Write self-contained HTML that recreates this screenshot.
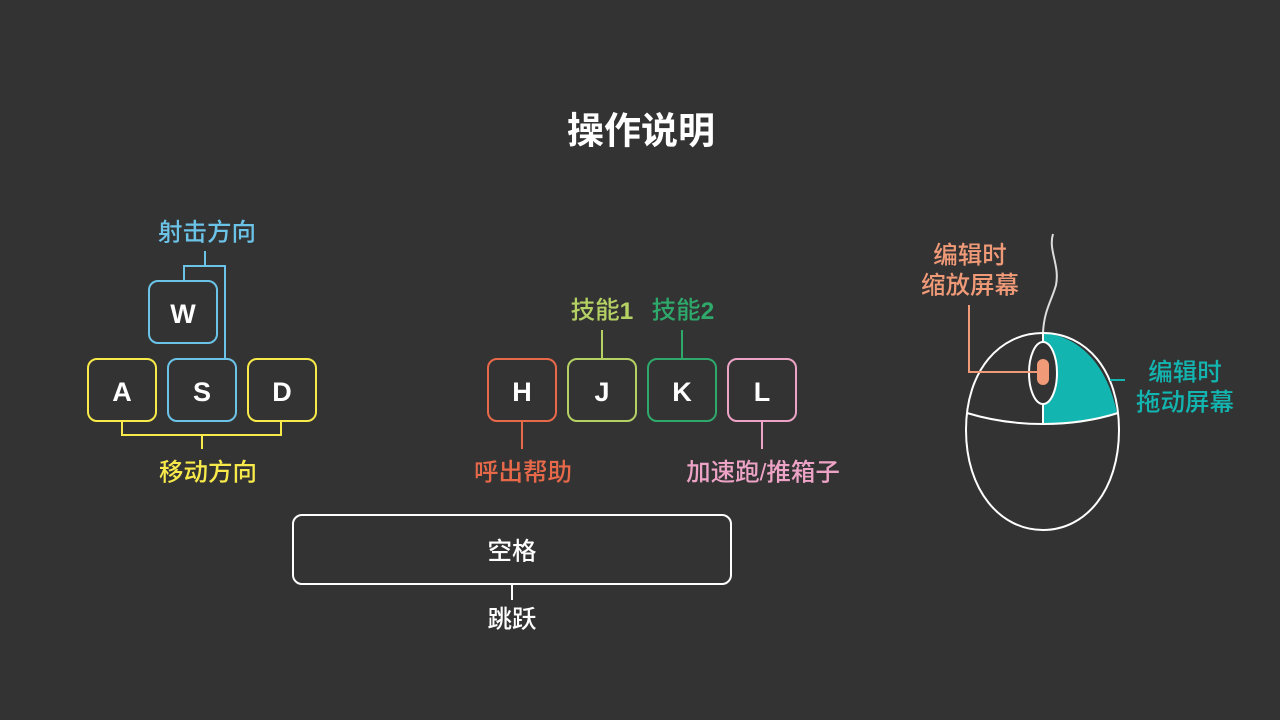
<!DOCTYPE html>
<html><head><meta charset="utf-8"><style>
html,body{margin:0;padding:0;background:#333333;width:1280px;height:720px;overflow:hidden}
svg{display:block}
text{font-family:"Liberation Sans","Noto Sans CJK SC",sans-serif;text-anchor:middle;dominant-baseline:central}
.l{font-size:24.5px;font-weight:500}
.k{font-size:27px;font-weight:bold;fill:#fff}
</style></head><body>
<svg width="1280" height="720" viewBox="0 0 1280 720">
<text x="641" y="131" style="font-size:37px;font-weight:bold" fill="#fff">操作说明</text>

<g fill="none" stroke-width="2">
<g stroke="#6cc3e8">
<rect x="149" y="281" width="68" height="62" rx="9"/>
<rect x="168" y="359" width="68" height="62" rx="9"/>
<polyline points="205,251 205,266"/>
<polyline points="184,281 184,266 225,266 225,359"/>
</g>
<g stroke="#f7ea4a">
<rect x="88" y="359" width="68" height="62" rx="9"/>
<rect x="248" y="359" width="68" height="62" rx="9"/>
<polyline points="122,421 122,435 281,435 281,421"/>
<polyline points="202,435 202,449"/>
</g>
<g stroke="#e8694a"><rect x="488" y="359" width="68" height="62" rx="9"/><line x1="522" y1="421" x2="522" y2="449"/></g>
<g stroke="#b5d164"><rect x="568" y="359" width="68" height="62" rx="9"/><line x1="602" y1="330" x2="602" y2="359"/></g>
<g stroke="#2ea86b"><rect x="648" y="359" width="68" height="62" rx="9"/><line x1="682" y1="330" x2="682" y2="359"/></g>
<g stroke="#eda3c6"><rect x="728" y="359" width="68" height="62" rx="9"/><line x1="762" y1="421" x2="762" y2="449"/></g>
<g stroke="#fff"><rect x="293" y="515" width="438" height="69" rx="9"/><line x1="512" y1="584" x2="512" y2="600"/></g>
</g>

<text class="l" x="207" y="233" fill="#6cc3e8">射击方向</text>
<text class="l" x="208" y="473" fill="#f7ea4a">移动方向</text>
<text class="l" x="602" y="311" fill="#b5d164">技能<tspan font-weight="bold">1</tspan></text>
<text class="l" x="683" y="311" fill="#2ea86b">技能<tspan font-weight="bold">2</tspan></text>
<text class="l" x="523" y="473" fill="#e8694a">呼出帮助</text>
<text class="l" x="763" y="473" fill="#eda3c6">加速跑/推箱子</text>
<text class="l" x="512" y="552" fill="#fff">空格</text>
<text class="l" x="512" y="620" fill="#fff">跳跃</text>

<text class="k" x="183" y="314">W</text>
<text class="k" x="122" y="392">A</text>
<text class="k" x="202" y="392">S</text>
<text class="k" x="282" y="392">D</text>
<text class="k" x="522" y="392">H</text>
<text class="k" x="602" y="392">J</text>
<text class="k" x="682" y="392">K</text>
<text class="k" x="762" y="392">L</text>

<path d="M1053,234 C1048,250 1060,265 1056,285 C1052,300 1044,310 1043,333" fill="none" stroke="#ddd" stroke-width="2"/>
<path d="M1043,333 C1080,336 1107,365 1117,413 C1095,420 1070,424 1043,424 Z" fill="#13b5b0"/>
<path d="M1043,333 C1000,333 966,370 966,430 C966,490 1000,530 1043,530 C1086,530 1119,490 1119,430 C1119,370 1086,333 1043,333 Z" fill="none" stroke="#fff" stroke-width="2"/>
<line x1="1043" y1="333" x2="1043" y2="424" stroke="#fff" stroke-width="2"/>
<path d="M967,413 C990,420 1015,424 1043,424 C1071,424 1096,420 1118,413" fill="none" stroke="#fff" stroke-width="2"/>
<ellipse cx="1043" cy="373" rx="14" ry="31" fill="#333" stroke="#fff" stroke-width="2"/>
<rect x="1037" y="359" width="12" height="26" rx="6" fill="#f09a78"/>
<polyline points="969,305 969,372 1037,372" fill="none" stroke="#f09a78" stroke-width="2"/>
<line x1="1110" y1="380" x2="1125" y2="380" stroke="#13b5b0" stroke-width="2"/>
<text class="l" x="970" y="256" fill="#f09a78">编辑时</text>
<text class="l" x="970" y="286" fill="#f09a78">缩放屏幕</text>
<text class="l" x="1185" y="373" fill="#13b5b0">编辑时</text>
<text class="l" x="1185" y="403" fill="#13b5b0">拖动屏幕</text>
</svg>
</body></html>
